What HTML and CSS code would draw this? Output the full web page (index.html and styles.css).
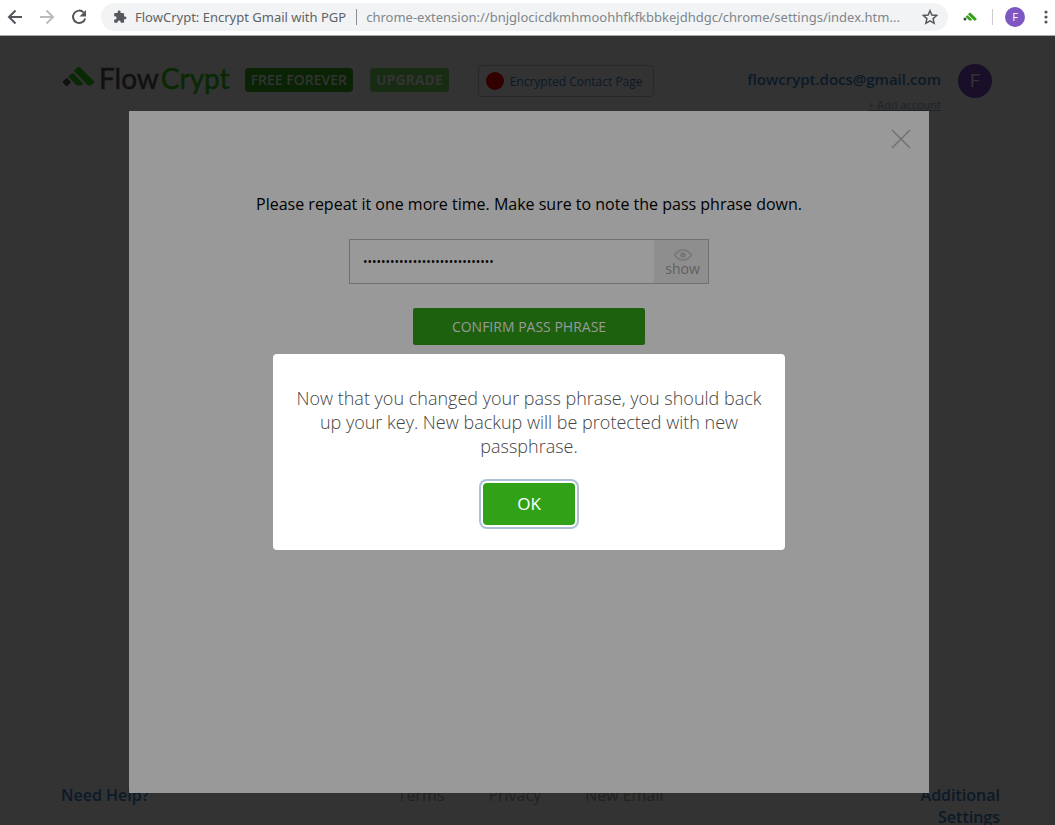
FILE: index.html
```html
<!DOCTYPE html>
<html lang="en">
<head>
<meta charset="utf-8">
<title>FlowCrypt: Encrypt Gmail with PGP</title>
<link rel="stylesheet" href="styles.css">
</head>
<body>
<div class="toolbar">
  <button class="nav-btn" aria-label="Back"><svg width="16" height="16" viewBox="0 0 16 16" fill="none" stroke="#54585d" stroke-width="2"><path d="M15 8H2M8.500 1.500L2 8l6.500 6.500"/></svg></button>
  <button class="nav-btn" aria-label="Forward"><svg width="16" height="16" viewBox="0 0 16 16" fill="none" stroke="#babcbe" stroke-width="2"><path d="M1 8h13M7.500 1.500L14 8l-6.500 6.500"/></svg></button>
  <button class="nav-btn" aria-label="Reload"><svg width="16" height="16" viewBox="0 0 16 16"><path d="M12.600 3.400A6.200 6.200 0 1 0 14.200 9.500" fill="none" stroke="#54585d" stroke-width="2"/><path d="M15 1v6.500H8.500z" fill="#54585d"/></svg></button>
  <div class="address">
    <svg width="14" height="14" viewBox="0 0 24 24" fill="#54585d"><path d="M20.500 11H19V7a2 2 0 0 0-2-2h-4V3.500a2.500 2.500 0 0 0-5 0V5H4a2 2 0 0 0-2 2v3.800h1.500a2.700 2.700 0 0 1 0 5.400H2V20a2 2 0 0 0 2 2h3.800v-1.500a2.700 2.700 0 0 1 5.400 0V22H17a2 2 0 0 0 2-2v-4h1.500a2.500 2.500 0 0 0 0-5z"/></svg>
    <span class="site">FlowCrypt: Encrypt Gmail with PGP</span>
    <span class="url">chrome-extension://bnjglocicdkmhmoohhfkfkbbkejdhdgc/chrome/settings/index.htm...</span>
    <button class="star" aria-label="Bookmark"><svg width="16" height="16" viewBox="0 0 24 24" fill="none" stroke="#54585d" stroke-width="2.200"><path d="M12 2.500l2.800 6.600 7.200.6-5.400 4.700 1.600 7-6.200-3.700-6.200 3.700 1.600-7L2 9.700l7.200-.6z"/></svg></button>
  </div>
  <button class="ext" aria-label="FlowCrypt"><svg width="14" height="9" viewBox="0 0 33 20"><use href="#mark" fill="#31a217" color="#444"/></svg></button>
  <button class="profile" aria-label="Profile">F</button>
  <button class="menu" aria-label="Menu"><svg width="4" height="14" viewBox="0 0 4 14" fill="#54585d"><circle cx="2" cy="2" r="1.600"/><circle cx="2" cy="7" r="1.600"/><circle cx="2" cy="12" r="1.600"/></svg></button>
</div>

<div class="page">
  <header class="header">
    <a class="logo" href="#" aria-label="FlowCrypt home">
      <svg width="33" height="20" viewBox="0 0 33 20"><defs><g id="mark"><path d="M15.700 1.200q1-1 2 0L31.600 14.800q1.200 1.200 0 2.400l-1.200 1.400q-1.200 1-2.600 1-1.400 0-2.600-1.200L12.400 5.600q-.6-.8 0-1.400z"/><path d="M9.600 7.400q.9-.8 1.800 0l9 9q1.200 1.200.2 2.200-.9.900-2.600.9h-1.800q-1.500 0-2.600-1.200L6.700 11.300q-.6-.7 0-1.300z"/><rect x="1.600" y="13" width="6.200" height="6.200" rx="1.200" fill="currentColor" transform="rotate(45 4.700 16.100)"/></g></defs><use href="#mark" fill="#092904" color="#111"/></svg>
      <span class="wordmark">Flow<span class="word-green">Crypt</span></span>
    </a>
    <a class="badge badge-free" href="#">FREE FOREVER</a>
    <a class="badge badge-up" href="#">UPGRADE</a>
    <a class="contact" href="#"><span class="dot"></span>Encrypted Contact Page</a>
    <div class="account">
      <a class="email" href="#">flowcrypt.docs@gmail.com</a>
      <a class="add" href="#">+ Add account</a>
    </div>
    <span class="avatar">F</span>
  </header>
  <footer class="footer">
    <a class="help" href="#">Need Help?</a>
    <nav class="links"><a href="#">Terms</a><a href="#">Privacy</a><a href="#">New Email</a></nav>
    <a class="more" href="#">Additional Settings</a>
  </footer>

  <main class="panel">
    <button class="close" aria-label="Close"><svg width="20" height="20" viewBox="0 0 20 20" fill="none" stroke="#707070" stroke-width="1.500"><path d="M1 1l18 18M19 1L1 19"/></svg></button>
    <label class="prompt" for="phrase">Please repeat it one more time. Make sure to note the pass phrase down.</label>
    <div class="field">
      <input class="phrase" id="phrase" type="password" value="abcdefghijklmnopqrstuvwxyzabc">
      <button class="show"><svg width="20" height="12" viewBox="0 0 20 12"><path d="M1.500 6Q5.500 1 10 1t8.500 5Q14.500 11 10 11T1.500 6z" fill="none" stroke="#777" stroke-width="1.500"/><circle cx="10" cy="6" r="2.800" fill="#777"/></svg>show</button>
    </div>
    <button class="confirm">CONFIRM PASS PHRASE</button>
  </main>

  <div class="overlay">
    <div class="dialog" role="dialog" aria-labelledby="message">
      <p class="message" id="message">Now that you changed your pass phrase, you should back up your key. New backup will be protected with new passphrase.</p>
      <button class="ok">OK</button>
    </div>
  </div>
</div>
</body>
</html>
```

FILE: styles.css
```css
* { box-sizing: border-box; }
body {
  margin: 0;
  min-height: 100vh;
  display: flex;
  flex-direction: column;
  background: #333;
  font-family: "Open Sans", sans-serif;
  overflow: hidden;
}
button { padding: 0; border: 0; background: none; font-family: inherit; }
a { color: inherit; text-decoration: none; }
svg { display: block; flex: none; }

.toolbar {
  display: flex;
  align-items: center;
  height: 36px;
  padding: 0 7px 2px 7px;
  background: #fff;
  border-bottom: 1px solid #a8a8a8;
}
.nav-btn { width: 16px; margin-right: 16px; }
.address {
  flex: 1;
  min-width: 0;
  display: flex;
  align-items: center;
  height: 28px;
  margin-left: -2px;
  padding: 0 10px 0 12px;
  border-radius: 14px;
  background: #f1f3f4;
  font-family: "Noto Sans", sans-serif;
  font-size: 13px;
  white-space: nowrap;
}
.site { margin-left: 8px; padding-right: 10px; border-right: 1px solid #8a8d91; line-height: 16px; color: #5f6368; }
.url { flex: 1; min-width: 0; overflow: hidden; margin-left: 9px; color: #80868b; }
.ext { margin-left: 15px; padding-right: 15px; border-right: 1px solid #ccc; height: 16px; }
.profile {
  width: 20px;
  height: 20px;
  margin: 0 19px 0 12px;
  border-radius: 50%;
  background: #7e57c2;
  color: #fff;
  font-size: 11px;
}

.page { position: relative; flex: 1; display: flex; flex-direction: column; justify-content: space-between; }
.header { display: flex; align-items: flex-start; padding: 27px 63px 0 62px; }
.logo { display: flex; align-items: flex-start; gap: 4px; padding-top: 3px; }
.wordmark { font-family: Lato, sans-serif; font-size: 28px; line-height: 24px; color: #111; -webkit-text-stroke: 0.5px; }
.word-green { color: #092904; margin-left: 2px; }
.badge {
  height: 24px;
  margin: 5px 0 0 15px;
  padding: 0 6px;
  border-radius: 4px;
  font-size: 14px;
  font-weight: 600;
  line-height: 24px;
}
.badge-free { background: #0a2305; color: #333; }
.badge-up { margin-left: 17px; background: #182c13; color: #333; font-weight: 700; }
.contact {
  display: flex;
  align-items: center;
  gap: 6px;
  height: 32px;
  margin: 2px 0 0 29px;
  padding: 0 10px 0 7px;
  border: 1px solid #282828;
  border-radius: 4px;
  font-size: 12px;
  color: #0b1a28;
}
.dot { width: 18px; height: 18px; border-radius: 50%; background: #330000; }
.account { display: flex; flex-direction: column; align-items: flex-end; margin-left: auto; color: #0b1a28; }
.email { font-size: 15px; font-weight: 600; line-height: 32px; }
.add { margin-top: 2px; font-size: 11px; line-height: 16px; color: #1e242a; text-decoration: underline; }
.avatar {
  width: 34px;
  height: 34px;
  margin: 1px 0 0 17px;
  border-radius: 50%;
  background: #190f29;
  color: #333;
  font-family: Roboto, sans-serif;
  font-size: 19px;
  line-height: 34px;
  text-align: center;
}
.footer {
  display: grid;
  grid-template-columns: 1fr auto 1fr;
  padding: 0 55px 0 61px;
  margin-bottom: -3px;
  font-size: 16px;
  line-height: 22px;
}
.help, .more { color: #0b1a28; font-weight: 600; }
.more { width: 90px; justify-self: end; text-align: right; }
.links { display: flex; gap: 44px; color: #222; }

.panel {
  position: absolute;
  top: 75px;
  bottom: 32px;
  left: 129px;
  right: 126px;
  display: flex;
  flex-direction: column;
  align-items: center;
  background: #999;
}
.close { align-self: flex-end; margin: 18px 18px 0 0; }
.prompt { margin-top: 43px; font-size: 16px; line-height: 24px; color: #000; }
.field {
  display: flex;
  width: 360px;
  height: 45px;
  margin-top: 23px;
  border: 1px solid #707070;
}
.phrase { flex: 1; min-width: 0; padding: 0 13px; border: 0; background: none; font-family: "Open Sans", sans-serif; font-size: 12px; color: #000; }
.show {
  width: 54px;
  padding: 2px 0 0 3px;
  display: flex;
  flex-direction: column;
  align-items: center;
  justify-content: center;
  background: #8e8e8e;
  font-size: 14px;
  line-height: 16px;
  color: #606060;
}
.confirm {
  width: 232px;
  height: 37px;
  margin-top: 24px;
  border-radius: 2px;
  background: #1d610e;
  font-size: 14px;
  color: #999;
}

.overlay {
  position: absolute;
  inset: 0;
  display: flex;
  justify-content: center;
  align-items: flex-start;
  padding: 318px 0 0 3px;
}
.dialog {
  display: flex;
  flex-direction: column;
  align-items: center;
  width: 512px;
  padding: 32px 20px 25px;
  border-radius: 4px;
  background: #fff;
}
.message { margin: 0; font-size: 18px; font-weight: 300; line-height: 24px; text-align: center; color: #444; }
.ok {
  width: 92px;
  height: 42px;
  margin-top: 25px;
  padding-bottom: 2px;
  border-radius: 4px;
  background: #31a217;
  box-shadow: 0 0 0 2px #fff, 0 0 0 4px #adc1d5;
  font-size: 17px;
  font-weight: 500;
  color: #fff;
}
```
